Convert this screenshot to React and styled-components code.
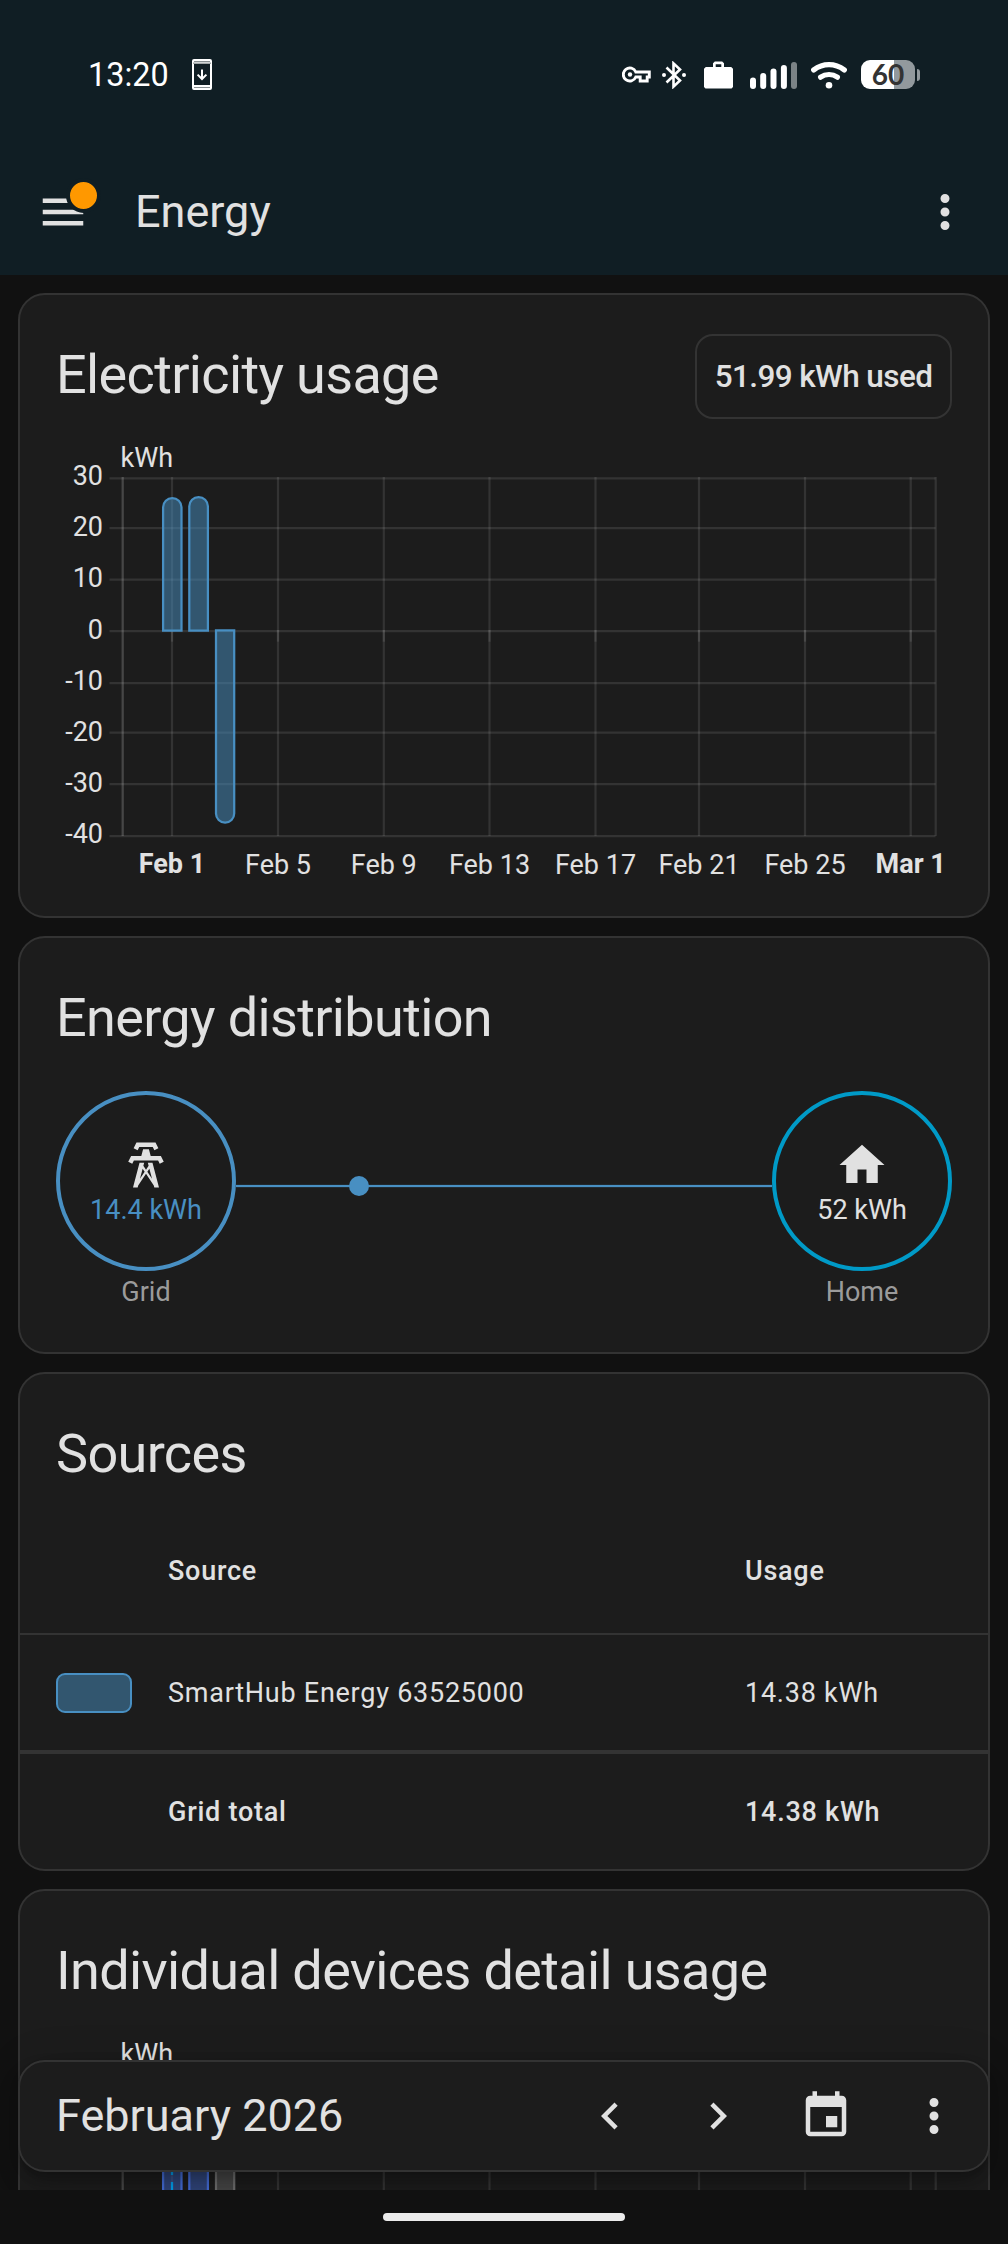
import React from 'react';
import styled, { createGlobalStyle } from 'styled-components';

const ICONS = {
  menu: 'M3,6H21V8H3V6M3,11H21V13H3V11M3,16H21V18H3V16Z',
  dots: 'M12,16A2,2 0 0,1 14,18A2,2 0 0,1 12,20A2,2 0 0,1 10,18A2,2 0 0,1 12,16M12,10A2,2 0 0,1 14,12A2,2 0 0,1 12,14A2,2 0 0,1 10,12A2,2 0 0,1 12,10M12,4A2,2 0 0,1 14,6A2,2 0 0,1 12,8A2,2 0 0,1 10,6A2,2 0 0,1 12,4Z',
  tower: 'M8.28,5.45L6.5,4.55L7.76,2H16.23L17.5,4.55L15.72,5.44L15,4H9L8.28,5.45M18.62,8H14.09L13.3,5H10.7L9.91,8H5.38L4.1,10.55L5.89,11.44L6.62,10H17.38L18.1,11.45L19.89,10.56L18.62,8M17.77,22H15.7L15.46,21.1L12,15.9L8.53,21.1L8.3,22H6.23L9.12,11H11.19L10.83,12.35L12,14.1L13.16,12.35L12.81,11H14.88L17.77,22M11.4,15L10.5,13.65L9.32,18.13L11.4,15M14.68,18.12L13.5,13.64L12.6,15L14.68,18.12Z',
  home: 'M10,20V14H14V20H19V12H22L12,3L2,12H5V20H10Z',
  left: 'M15.41,16.58L10.83,12L15.41,7.41L14,6L8,12L14,18L15.41,16.58Z',
  right: 'M8.59,16.58L13.17,12L8.59,7.41L10,6L16,12L10,18L8.59,16.58Z',
  calendar: 'M19,19H5V8H19M16,1V3H8V1H6V3H5C3.89,3 3,3.89 3,5V19A2,2 0 0,0 5,21H19A2,2 0 0,0 21,19V5C21,3.89 20.1,3 19,3H18V1M17,12H12V17H17V12Z',
};

const Icon = ({ name }) => (
  <IconSvg viewBox="0 0 24 24">
    <path d={ICONS[name]} />
  </IconSvg>
);

const days = [
  { x: 152, label: 'Feb 1', bold: true },
  { x: 258, label: 'Feb 5' },
  { x: 363.8, label: 'Feb 9' },
  { x: 469.5, label: 'Feb 13' },
  { x: 575.5, label: 'Feb 17' },
  { x: 679, label: 'Feb 21' },
  { x: 785, label: 'Feb 25' },
  { x: 890.7, label: 'Mar 1', bold: true },
];

const levels = [
  { y: 48.3, text: 55, label: '30' },
  { y: 98, text: 106, label: '20' },
  { y: 149.5, text: 157, label: '10' },
  { y: 201.2, text: 209, label: '0' },
  { y: 253, text: 260, label: '-10' },
  { y: 302.5, text: 311, label: '-20' },
  { y: 354, text: 362, label: '-30' },
  { y: 406, text: 413, label: '-40' },
];

const Grid = ({ bottom }) => (
  <g stroke="#e1e1e1" strokeOpacity="0.12" strokeWidth="2.25">
    {days.map((d) => <line key={d.label} x1={d.x} x2={d.x} y1="47" y2={bottom} />)}
    <line x1="915.7" x2="915.7" y1="47" y2={bottom} />
    <line x1="102.7" x2="102.7" y1="47" y2={bottom} strokeOpacity="0.22" />
  </g>
);

const UsageChart = () => (
  <ChartSvg width="968" height="486" viewBox="0 0 968 486">
    <text x="100.6" y="36.5">kWh</text>
    <g stroke="#e1e1e1" strokeOpacity="0.12" strokeWidth="2.25">
      {levels.map((l) => <line key={l.label} x1="89.5" x2="915.5" y1={l.y} y2={l.y} />)}
      {days.map((d) => <line key={d.label} x1={d.x} x2={d.x} y1="200" y2="211.7" />)}
    </g>
    <Grid bottom="406" />
    <g fill="#488fc2" fillOpacity="0.5" stroke="#488fc2" strokeWidth="2.25">
      <path d="M143.1 200.6V77.3a9.2 9.2 0 0 1 18.4 0V200.6Z" />
      <path d="M169.3 200.6V76.3a9.3 9.3 0 0 1 18.6 0V200.6Z" />
      <path d="M196 200.3H214.2V383.6a9.1 9.1 0 0 1 -18.2 0Z" />
    </g>
    {levels.map((l) => (
      <text key={l.label} x="83" y={l.text} textAnchor="end">{l.label}</text>
    ))}
    {days.map((d) => (
      <text
        key={d.label}
        x={d.x}
        y={d.bold ? 442.7 : 443.7}
        textAnchor="middle"
        fontWeight={d.bold ? 700 : 400}
      >
        {d.label}
      </text>
    ))}
  </ChartSvg>
);

const DevicesChart = () => (
  <ChartSvg width="968" height="486" viewBox="0 0 968 486">
    <text x="100.6" y="36.5">kWh</text>
    <Grid bottom="486" />
    <g strokeWidth="2.25">
      <path d="M143.1 100H161.5V486H143.1Z" fill="#4269d0" fillOpacity="0.5" stroke="#4269d0" />
      <path d="M169.3 100H187.9V486H169.3Z" fill="#4269d0" fillOpacity="0.5" stroke="#4269d0" />
      <path d="M196 100H214.2V486H196Z" fill="#6b6b6b" fillOpacity="0.5" stroke="#6b6b6b" />
      <line x1="152" x2="152" y1="139" y2="486" stroke="#039be5" strokeDasharray="9 7" strokeDashoffset="15" />
    </g>
  </ChartSvg>
);

const App = () => {
  return (
    <Screen>
      <GlobalStyle />
      <Header>
        <StatusBar>
          <Clock>13:20</Clock>
          <svg width="20" height="31" viewBox="0 0 20 31" fill="none" stroke="#fff">
            <rect x="1" y="1" width="18" height="29" rx="1" strokeWidth="2" />
            <path d="M1 3.8H19M1 27.2H19" strokeWidth="2.4" />
            <path d="M1 4.2H19" stroke="#8b9294" strokeWidth="1.2" />
            <path d="M10 10.5V20M5.6 15.6L10 20L14.4 15.6" strokeWidth="2" />
          </svg>
          <StatusIcons>
            <svg width="29" height="17" viewBox="0 0 29 17" fill="none" stroke="#fff">
              <path d="M13.8 6A6.5 6.5 0 1 0 13.8 11H18.2V15H25.2V11H27.3V6Z" strokeWidth="2.9" />
              <circle cx="8" cy="8.5" r="2.2" fill="#fff" stroke="none" />
            </svg>
            <BluetoothIcon width="24" height="28" viewBox="0 0 24 28" fill="none" stroke="#fff" strokeWidth="2.6">
              <path d="M4.5 6.5L18 19.5L11.5 25.6V2.4L18 8.5L4.5 21.5" />
              <circle cx="2" cy="14" r="2" fill="#fff" stroke="none" />
              <circle cx="22" cy="14" r="2" fill="#fff" stroke="none" />
            </BluetoothIcon>
            <BriefcaseIcon width="29" height="28" viewBox="0 0 29 28" fill="#fff">
              <path d="M10.8 0.5H18.2L20 2.3V6H27.2L29 7.8V26L27.5 27.5H1.5L0 26V7.8L1.8 6H9V2.3ZM11.7 6H17.3V3.2H11.7Z" fillRule="evenodd" />
            </BriefcaseIcon>
            <SignalIcon width="47" height="28" viewBox="0 0 47 28" fill="#fff">
              <rect x="0" y="16.5" width="6" height="11.5" rx="3" />
              <rect x="10.2" y="12" width="6" height="16" rx="3" />
              <rect x="20.5" y="7.5" width="6" height="20.5" rx="3" />
              <rect x="30.9" y="4" width="6" height="24" rx="3" />
              <rect x="41" y="1" width="6" height="27" rx="3" fillOpacity="0.45" />
            </SignalIcon>
            <WifiIcon width="36" height="28" viewBox="0 0 36 28" fill="none" stroke="#fff" strokeLinecap="round">
              <path d="M2.8 8.8C12 1.9 24 1.9 33.2 8.8" strokeWidth="5.4" />
              <path d="M9.6 16.2C14.6 12.6 21.4 12.6 26.4 16.2" strokeWidth="5.2" />
              <circle cx="18" cy="24.3" r="3.3" fill="#fff" stroke="none" />
            </WifiIcon>
            <Battery>60</Battery>
            <BatteryNub />
          </StatusIcons>
        </StatusBar>
        <Toolbar>
          <MenuButton>
            <Icon name="menu" />
            <Badge />
          </MenuButton>
          <h1>Energy</h1>
          <Icon name="dots" />
        </Toolbar>
      </Header>

      <Content>
        <Card $height={625}>
          <CardHeader>
            <h2>Electricity usage</h2>
            <Chip>51.99 kWh used</Chip>
          </CardHeader>
          <UsageChart />
        </Card>

        <Card $height={418}>
          <CardHeader>
            <h2>Energy distribution</h2>
          </CardHeader>
          <Distribution>
            <Node>
              <Circle $color="#488fc2">
                <Icon name="tower" />
                <Value $color="#488fc2">14.4 kWh</Value>
              </Circle>
              <NodeLabel>Grid</NodeLabel>
            </Node>
            <Flow width="536" height="20" viewBox="0 0 536 20" fill="#488fc2">
              <rect y="8.9" width="536" height="2.25" />
              <circle cx="123" cy="10" r="10" />
            </Flow>
            <Node>
              <Circle $color="#009ac7">
                <Icon name="home" />
                <Value>52 kWh</Value>
              </Circle>
              <NodeLabel>Home</NodeLabel>
            </Node>
          </Distribution>
        </Card>

        <Card $height={499}>
          <CardHeader>
            <h2>Sources</h2>
          </CardHeader>
          <Row $height={124} $bold>
            <span />
            <span>Source</span>
            <span>Usage</span>
          </Row>
          <Row $height={117} $border={2}>
            <Swatch />
            <span>SmartHub Energy 63525000</span>
            <span>14.38 kWh</span>
          </Row>
          <Row $height={119} $border={4} $bold>
            <span />
            <span>Grid total</span>
            <span>14.38 kWh</span>
          </Row>
        </Card>

        <Card $height={625}>
          <CardHeader>
            <h2>Individual devices detail usage</h2>
          </CardHeader>
          <DevicesChart />
        </Card>

        <PeriodBar>
          <h3>February 2026</h3>
          <Icon name="left" />
          <Icon name="right" />
          <Icon name="calendar" />
          <Icon name="dots" />
        </PeriodBar>
      </Content>

      <GestureArea>
        <GestureHandle />
      </GestureArea>
    </Screen>
  );
};

export default App;


const GlobalStyle = createGlobalStyle`
    body {
        margin: 0;
        background: #111111;
    }

    h1, h2, h3 {
        margin: 0;
        font-weight: 400;
    }
`

const Screen = styled.div`
    width: 1008px;
    height: 2244px;

    display: flex;
    flex-direction: column;
    overflow: hidden;

    background: #111111;
    color: #e1e1e1;
    font-family: Roboto, sans-serif;
`

const IconSvg = styled.svg`
    display: block;
    flex: none;
    width: 54px;
    height: 54px;
    fill: #e1e1e1;
`

const Header = styled.header`
    height: 275px;
    flex: none;
    background: #101e24;
`

const StatusBar = styled.div`
    height: 149px;
    box-sizing: border-box;
    padding: 0 88px;

    display: flex;
    align-items: center;

    svg {
        display: block;
        flex: none;
    }
`

const Clock = styled.div`
    width: 104px;
    color: #ffffff;
    font-size: 32.4px;
    line-height: 40px;
`

const StatusIcons = styled.div`
    margin-left: auto;

    display: flex;
    align-items: center;
`

const BluetoothIcon = styled.svg`
    margin-left: 11px;
`

const BriefcaseIcon = styled.svg`
    margin-left: 18px;
`

const SignalIcon = styled.svg`
    margin-left: 17px;
`

const WifiIcon = styled.svg`
    margin-left: 14px;
`

const Battery = styled.div`
    width: 54px;
    height: 29px;
    margin-left: 14px;
    border-radius: 9px;
    background: linear-gradient(90deg, #ffffff 33px, #92999d 33px);

    color: #333333;
    font-family: Lato, sans-serif;
    font-size: 28px;
    font-weight: 700;
    line-height: 29px;
    text-align: center;
`

const BatteryNub = styled.div`
    width: 3px;
    height: 12px;
    margin-left: 2px;
    border-radius: 0 3px 3px 0;
    background: #92999d;
`

const Toolbar = styled.div`
    height: 126px;
    box-sizing: border-box;
    padding: 0 36px;

    display: flex;
    align-items: center;

    h1 {
        flex: 1;
        margin-left: 45px;
        font-size: 45px;
        line-height: 54px;
    }
`

const MenuButton = styled.div`
    position: relative;
`

const Badge = styled.div`
    position: absolute;
    top: -7px;
    left: 29.5px;
    width: 27px;
    height: 27px;
    border: 4.5px solid #101e24;
    border-radius: 50%;
    background: #ff9800;
`

const Content = styled.main`
    position: relative;
    height: 1915px;
    flex: none;
    box-sizing: border-box;
    padding: 18px 18px 0;
    overflow: hidden;

    display: flex;
    flex-direction: column;
    gap: 18px;
`

const Card = styled.section`
    height: ${(props) => props.$height}px;
    flex: none;
    box-sizing: border-box;
    border: 2px solid #333333;
    border-radius: 27px;
    background: #1c1c1c;
    overflow: hidden;
`

const CardHeader = styled.div`
    height: 135px;
    box-sizing: border-box;
    padding: 24px 36px 0;

    display: flex;
    align-items: flex-start;
    justify-content: space-between;

    h2 {
        font-size: 54px;
        line-height: 111px;
        letter-spacing: -0.012em;
        white-space: nowrap;
    }
`

const Chip = styled.div`
    margin-top: 15px;
    height: 85px;
    width: 257px;
    box-sizing: border-box;
    border: 2px solid #333333;
    border-radius: 18px;

    font-size: 31.5px;
    font-weight: 500;
    letter-spacing: -0.6px;
    line-height: 81px;
    text-align: center;
    white-space: nowrap;
`

const ChartSvg = styled.svg`
    display: block;

    text {
        fill: #e1e1e1;
        stroke: none;
        font-family: Roboto, sans-serif;
        font-size: 27px;
    }
`

const Distribution = styled.div`
    padding: 18px 36px 0;
    display: flex;
    align-items: flex-start;
`

const Node = styled.div`
    width: 180px;
    flex: none;
    text-align: center;
`

const Circle = styled.div`
    height: 180px;
    box-sizing: border-box;
    padding-top: 42.5px;
    border: 4px solid ${(props) => props.$color};
    border-radius: 50%;

    display: flex;
    flex-direction: column;
    align-items: center;
`

const Value = styled.div`
    color: ${(props) => props.$color || '#e1e1e1'};
    font-size: 27px;
    line-height: 36px;
`

const NodeLabel = styled.div`
    color: #9b9b9b;
    font-size: 27px;
    line-height: 43px;
`

const Flow = styled.svg`
    display: block;
    margin-top: 85px;
`

const Row = styled.div`
    height: ${(props) => props.$height}px;
    box-sizing: border-box;
    padding: 0 36px;
    border-top: ${(props) => props.$border || 0}px solid #333333;

    display: grid;
    grid-template-columns: 112px 577px 1fr;
    align-items: center;

    font-size: 27px;
    font-weight: ${(props) => (props.$bold ? 500 : 400)};
    letter-spacing: 0.75px;
`

const Swatch = styled.div`
    width: 76px;
    height: 40px;
    box-sizing: border-box;
    border: 2px solid #488fc2;
    border-radius: 9px;
    background: #32566f;
`

const PeriodBar = styled.div`
    position: absolute;
    left: 18px;
    right: 18px;
    bottom: 18px;
    height: 112px;
    box-sizing: border-box;
    padding: 0 27px 0 36px;
    border: 2px solid #333333;
    border-radius: 27px;
    background: #1c1c1c;
    box-shadow: 0 7px 11px -2px rgba(0, 0, 0, 0.2), 0 14px 23px rgba(0, 0, 0, 0.14), 0 2px 41px rgba(0, 0, 0, 0.12);

    display: flex;
    align-items: center;
    gap: 54px;

    h3 {
        flex: 1;
        font-size: 45px;
        line-height: 54px;
    }
`

const GestureArea = styled.div`
    flex: 1;
    display: flex;
    justify-content: center;
    align-items: center;
`

const GestureHandle = styled.div`
    width: 242px;
    height: 8px;
    border-radius: 4px;
    background: #ececec;
`
